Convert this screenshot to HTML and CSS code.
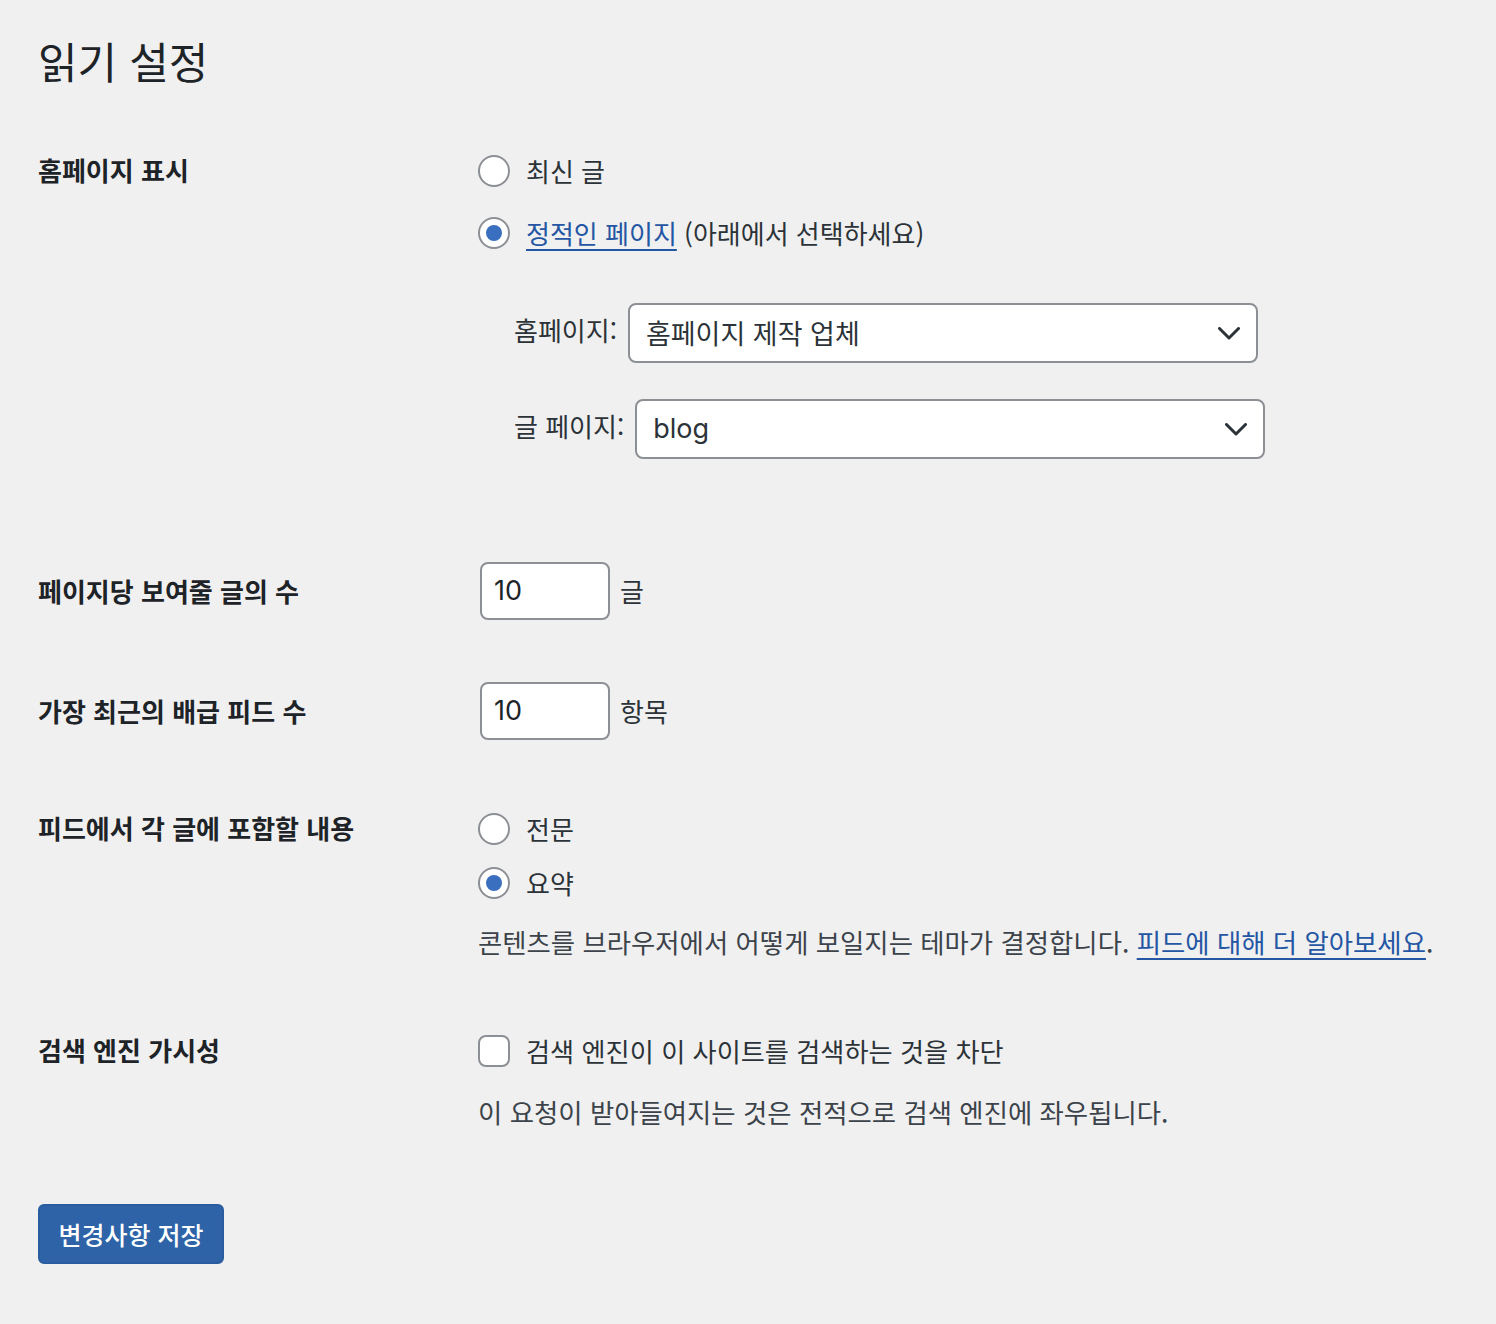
FILE: index.html
```html
<!DOCTYPE html>
<html lang="ko">
<head>
<meta charset="utf-8">
<title>읽기 설정</title>
<link rel="stylesheet" href="styles.css">
</head>
<body>
<div class="wrap">
  <h1 class="title">읽기 설정</h1>

  <div class="row row-front">
    <div class="th">홈페이지 표시</div>
    <div class="td">
      <label class="option"><span class="radio"></span><span>최신 글</span></label>
      <label class="option gap22"><span class="radio checked"></span><span><a class="link" href="#">정적인 페이지</a> (아래에서 선택하세요)</span></label>
      <div class="page-selects">
        <div class="sel-row">
          <span class="sel-label">홈페이지:</span>
          <div class="select"><span class="sel-text">홈페이지 제작 업체</span>
            <svg class="chev" width="22" height="13" viewBox="0 0 22 13"><path d="M1.5 1.5 L11 11 L20.5 1.5" fill="none" stroke="#2c3338" stroke-width="3" stroke-linecap="round" stroke-linejoin="round"/></svg>
          </div>
        </div>
        <div class="sel-row second">
          <span class="sel-label">글 페이지:</span>
          <div class="select"><span class="sel-text latin">blog</span>
            <svg class="chev" width="22" height="13" viewBox="0 0 22 13"><path d="M1.5 1.5 L11 11 L20.5 1.5" fill="none" stroke="#2c3338" stroke-width="3" stroke-linecap="round" stroke-linejoin="round"/></svg>
          </div>
        </div>
      </div>
    </div>
  </div>

  <div class="row row-center row-posts">
    <div class="th">페이지당 보여줄 글의 수</div>
    <div class="td inline">
      <div class="num latin">10</div><span class="unit">글</span>
    </div>
  </div>

  <div class="row row-center row-feed">
    <div class="th">가장 최근의 배급 피드 수</div>
    <div class="td inline">
      <div class="num latin">10</div><span class="unit">항목</span>
    </div>
  </div>

  <div class="row row-content">
    <div class="th">피드에서 각 글에 포함할 내용</div>
    <div class="td">
      <label class="option"><span class="radio"></span><span>전문</span></label>
      <label class="option gap14"><span class="radio checked"></span><span>요약</span></label>
      <p class="desc desc-feed">콘텐츠를 브라우저에서 어떻게 보일지는 테마가 결정합니다. <a class="link" href="#">피드에 대해 더 알아보세요</a>.</p>
    </div>
  </div>

  <div class="row row-search">
    <div class="th">검색 엔진 가시성</div>
    <div class="td">
      <label class="option"><span class="checkbox"></span><span class="wide">검색 엔진이 이 사이트를 검색하는 것을 차단</span></label>
      <p class="desc desc-search">이 요청이 받아들여지는 것은 전적으로 검색 엔진에 좌우됩니다.</p>
    </div>
  </div>

  <div class="submit">
    <button class="button-primary" type="button">변경사항 저장</button>
  </div>
</div>
</body>
</html>
```

FILE: styles.css
```css
html, body {
  margin: 0;
  padding: 0;
  background: #f0f0f1;
}
body {
  font-family: "Noto Sans CJK KR", "Noto Sans", sans-serif;
  color: #1d2327;
  font-size: 26px;
}
.wrap {
  padding: 36px 38px 60px 38px;
}
.title {
  margin: 0;
  font-size: 43px;
  line-height: 48px;
  font-weight: 400;
  color: #1d2327;
}
.row {
  display: grid;
  grid-template-columns: 440px 1fr;
}
.row-front { margin-top: 67px; }
.row-posts { margin-top: 103px; }
.row-feed { margin-top: 62px; }
.row-content { margin-top: 69px; }
.row-search { margin-top: 69px; }
.row-center { align-items: center; }

.th {
  font-size: 26px;
  font-weight: 700;
  line-height: 40px;
  color: #1d2327;
}
.row-front .th, .row-content .th, .row-search .th { margin-top: -1px; }
.td {
  line-height: 40px;
  color: #2c3338;
}
.option {
  display: flex;
  align-items: center;
  gap: 16px;
  height: 40px;
}
.wide { font-size: 26.2px; }
.gap22 { margin-top: 22px; }
.gap14 { margin-top: 14px; }

.radio {
  box-sizing: border-box;
  width: 32px;
  height: 32px;
  border: 2px solid #8c8f94;
  border-radius: 50%;
  background: #fff;
  display: flex;
  align-items: center;
  justify-content: center;
  flex: none;
}
.radio.checked::after {
  content: "";
  width: 16px;
  height: 16px;
  border-radius: 50%;
  background: #3a6fbf;
}
.checkbox {
  box-sizing: border-box;
  width: 32px;
  height: 32px;
  border: 2px solid #8c8f94;
  border-radius: 8px;
  background: #fff;
  flex: none;
}
.link {
  color: #2456a3;
  text-decoration: underline;
  text-decoration-thickness: 2px;
  text-underline-offset: 5px;
}

.page-selects {
  margin-top: 50px;
  padding-left: 36px;
}
.sel-row {
  display: flex;
  align-items: center;
  gap: 11px;
}
.sel-row.second { margin-top: 36px; }
.sel-label {
  font-size: 26px;
  color: #2c3338;
  position: relative;
  top: -3px;
}
.select {
  box-sizing: border-box;
  width: 630px;
  height: 60px;
  border: 2px solid #8c8f94;
  border-radius: 8px;
  background: #fff;
  display: flex;
  align-items: center;
  justify-content: space-between;
  padding: 0 16px 0 16px;
  color: #2c3338;
}
.sel-text { font-size: 27px; }
.latin { font-family: Inter, "Noto Sans", "Noto Sans CJK KR", sans-serif; }

.inline {
  display: flex;
  align-items: center;
  gap: 10px;
}
.num {
  box-sizing: border-box;
  width: 130px;
  height: 58px;
  margin-left: 2px;
  border: 2px solid #8c8f94;
  border-radius: 8px;
  background: #fff;
  padding-left: 12px;
  display: flex;
  align-items: center;
  font-size: 27px;
  color: #1d2327;
}
.unit { color: #2c3338; }

.desc {
  margin: 0;
  font-size: 26.4px;
  line-height: 40px;
  color: #3c434a;
}
.desc-feed { margin-top: 19px; }
.desc-search { margin-top: 21px; }
.desc .link { color: #2456a3; }

.submit { margin-top: 72px; }
.button-primary {
  box-sizing: border-box;
  width: 186px;
  height: 60px;
  background: #2e63a8;
  border: 2px solid #2a5d9f;
  border-radius: 6px;
  color: #fff;
  font-family: "Noto Sans CJK KR", sans-serif;
  font-size: 25px;
  font-weight: 500;
  padding: 0;
}
```
